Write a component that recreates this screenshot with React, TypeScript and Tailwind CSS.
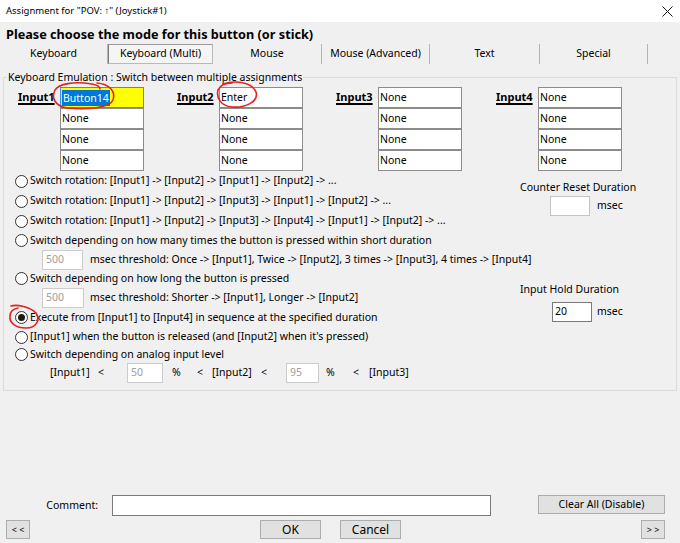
import React from "react";

const tabs = [
  { label: "Keyboard", w: "w-[108px]" },
  { label: "Keyboard (Multi)", w: "w-[105px]", active: true },
  { label: "Mouse", w: "w-[109px]" },
  { label: "Mouse (Advanced)", w: "w-[108px]" },
  { label: "Text", w: "w-[110px]" },
  { label: "Special", w: "w-[108px]" },
];

const columns = [
  { label: "Input1", w: "w-[159px]", first: "Button14" },
  { label: "Input2", w: "w-[159px]", first: "Enter" },
  { label: "Input3", w: "w-[160px]", first: "None" },
  { label: "Input4", w: "w-[126px]", first: "None" },
];

function Radio({ checked = false }: { checked?: boolean }) {
  return (
    <span className="ml-[11px] mr-[2px] flex h-[13px] w-[13px] shrink-0 items-center justify-center rounded-full border border-[#333333] bg-white">
      {checked && <span className="h-[7px] w-[7px] rounded-full bg-[#1b1b1b]" />}
    </span>
  );
}

function DisabledBox({ value, w }: { value: string; w: string }) {
  return (
    <span className={`flex h-[20px] ${w} shrink-0 items-center border border-[#cccccc] bg-white pl-[3px] text-[#a0a0a0]`}>
      {value}
    </span>
  );
}

function Cell({ text, kind }: { text: string; kind: "selected" | "plain" }) {
  if (kind === "selected") {
    return (
      <div className="flex h-[21px] w-[84px] items-center border border-[#3d8ee0] bg-[#ffff00] pl-[1px]">
        <span className="bg-[#0078d7] px-[1px] leading-[16px] text-white">{text}</span>
      </div>
    );
  }
  return (
    <div className="flex h-[21px] w-[84px] items-center border border-[#8c8c8c] bg-white pl-[1px]">{text}</div>
  );
}

function Button({ children, className }: { children: React.ReactNode; className: string }) {
  return (
    <div className={`flex items-center justify-center border border-[#adadad] bg-[#e1e1e1] ${className}`}>
      {children}
    </div>
  );
}

export default function App() {
  return (
    <div className="relative flex h-[543px] w-[680px] flex-col overflow-hidden bg-[#f0f0f0] font-['Noto_Sans',sans-serif] text-[10.5px] text-black">
      {/* window title */}
      <div className="flex h-[22px] shrink-0 items-center justify-between bg-white pl-[6px] pr-[7px] text-[9.5px]">
        <span>Assignment for "POV: ↑" (Joystick#1)</span>
        <svg width="11" height="11" viewBox="0 0 11 11">
          <path d="M0.5 0.5 L10.5 10.5 M10.5 0.5 L0.5 10.5" stroke="#111" strokeWidth="1" />
        </svg>
      </div>

      <div className="pl-[6px] pt-[3px] text-[12.7px] font-bold leading-[18px]">
        Please choose the mode for this button (or stick)
      </div>

      {/* mode tabs */}
      <div className="mt-[1px] flex h-[20px] shrink-0">
        {tabs.map((t) =>
          t.active ? (
            <div
              key={t.label}
              className={`${t.w} flex items-center justify-center border border-[#b9b9b9] border-l-[#7d7d7d] border-t-[#9a9a9a] bg-[#f5f5f5]`}
            >
              {t.label}
            </div>
          ) : (
            <div key={t.label} className={`${t.w} flex items-center justify-center border-r border-[#b4b4b4]`}>
              {t.label}
            </div>
          )
        )}
      </div>

      {/* keyboard emulation group */}
      <fieldset className="mx-[3px] mt-[5px] border border-[#dcdcdc]">
        <legend className="ml-[3px] px-[1px] leading-[16px]">
          Keyboard Emulation : Switch between multiple assignments
        </legend>

        <div className="flex pl-[14px] pt-[2px]">
          {columns.map((c, i) => (
            <div key={c.label} className={`flex ${c.w} shrink-0`}>
              <div className="flex h-[21px] w-[42px] items-center text-[11px] font-bold underline decoration-[1.5px] underline-offset-[2px]">
                {c.label}
              </div>
              <div className="flex flex-col">
                <Cell text={c.first} kind={i === 0 ? "selected" : "plain"} />
                <Cell text="None" kind="plain" />
                <Cell text="None" kind="plain" />
                <Cell text="None" kind="plain" />
              </div>
            </div>
          ))}
        </div>

        <div className="flex pb-[7px]">
          <div className="flex w-[516px] shrink-0 flex-col whitespace-nowrap">
            <div className="flex h-[20px] items-center">
              <Radio />
              <span>Switch rotation: [Input1] -&gt; [Input2] -&gt; [Input1] -&gt; [Input2] -&gt; ...</span>
            </div>
            <div className="flex h-[20px] items-center">
              <Radio />
              <span>Switch rotation: [Input1] -&gt; [Input2] -&gt; [Input3] -&gt; [Input1] -&gt; [Input2] -&gt; ...</span>
            </div>
            <div className="flex h-[20px] items-center">
              <Radio />
              <span>
                Switch rotation: [Input1] -&gt; [Input2] -&gt; [Input3] -&gt; [Input4] -&gt; [Input1] -&gt; [Input2] -&gt; ...
              </span>
            </div>
            <div className="flex h-[19px] items-center">
              <Radio />
              <span>Switch depending on how many times the button is pressed within short duration</span>
            </div>
            <div className="flex h-[19px] items-center pl-[38px]">
              <DisabledBox value="500" w="w-[41px]" />
              <span className="ml-[7px]">
                msec threshold: Once -&gt; [Input1], Twice -&gt; [Input2], 3 times -&gt; [Input3], 4 times -&gt; [Input4]
              </span>
            </div>
            <div className="flex h-[19px] items-center">
              <Radio />
              <span>Switch depending on how long the button is pressed</span>
            </div>
            <div className="flex h-[19px] items-center pl-[38px]">
              <DisabledBox value="500" w="w-[42px]" />
              <span className="ml-[6px]">msec threshold: Shorter -&gt; [Input1], Longer -&gt; [Input2]</span>
            </div>
            <div className="flex h-[21px] items-center">
              <Radio checked />
              <span>Execute from [Input1] to [Input4] in sequence at the specified duration</span>
            </div>
            <div className="flex h-[18px] items-center">
              <Radio />
              <span>[Input1] when the button is released (and [Input2] when it's pressed)</span>
            </div>
            <div className="flex h-[17px] items-center">
              <Radio />
              <span>Switch depending on analog input level</span>
            </div>
            <div className="flex h-[20px] items-center pl-[46px]">
              <span className="w-[48px] shrink-0">[Input1]</span>
              <span className="w-[29px] shrink-0">&lt;</span>
              <DisabledBox value="50" w="w-[36px]" />
              <span className="ml-[9px] w-[25px] shrink-0">%</span>
              <span className="w-[15px] shrink-0">&lt;</span>
              <span className="w-[49px] shrink-0">[Input2]</span>
              <span className="w-[25px] shrink-0">&lt;</span>
              <DisabledBox value="95" w="w-[33px]" />
              <span className="ml-[7px] w-[27px] shrink-0">%</span>
              <span className="w-[16px] shrink-0">&lt;</span>
              <span>[Input3]</span>
            </div>
          </div>

          {/* durations */}
          <div className="flex flex-col">
            <div className="mt-[8px] leading-[16px]">Counter Reset Duration</div>
            <div className="mt-[1px] flex items-center">
              <span className="ml-[30px] h-[20px] w-[40px] border border-[#c4c4c4] bg-white" />
              <span className="ml-[7px]">msec</span>
            </div>
            <div className="mt-[65px] leading-[16px]">Input Hold Duration</div>
            <div className="mt-[5px] flex items-center">
              <span className="ml-[32px] flex h-[20px] w-[40px] items-center border border-[#7a7a7a] bg-white pl-[2px]">
                20
              </span>
              <span className="ml-[5px]">msec</span>
            </div>
          </div>
        </div>
      </fieldset>

      <div className="flex-1" />

      {/* comment + actions */}
      <div className="flex h-[21px] shrink-0 items-start">
        <div className="flex h-[21px] w-[112px] items-center justify-end pr-[14px]">Comment:</div>
        <div className="h-[21px] w-[379px] border border-[#7a7a7a] bg-white" />
        <Button className="ml-auto mr-[15px] h-[19px] w-[127px]">Clear All (Disable)</Button>
      </div>
      <div className="mb-[4px] mt-[4px] flex h-[19px] shrink-0">
        <Button className="ml-[6px] h-[19px] w-[24px] text-[9px]">&lt; &lt;</Button>
        <Button className="ml-[230px] h-[19px] w-[61px] text-[12px]">OK</Button>
        <Button className="ml-[19px] h-[19px] w-[61px] text-[12px]">Cancel</Button>
        <Button className="ml-auto mr-[15px] h-[19px] w-[24px] text-[9px]">&gt; &gt;</Button>
      </div>

      {/* hand-drawn red marks */}
      <svg className="pointer-events-none absolute left-0 top-0" width="680" height="543" viewBox="0 0 680 543">
        <g fill="none" stroke="#e3231f" strokeWidth="1.6" strokeLinecap="round">
          <path d="M97 83 C109 84, 116 91, 113 100 C110 108, 86 110, 67 108 C55 106, 51 98, 55 90 C59 84, 73 81, 92 84 C97 85, 100 87, 100 89" />
          <path d="M223 84 C235 80, 252 82, 256 92 C259 102, 245 108, 232 107 C221 106, 216 98, 218 90 C220 85, 226 83, 232 83" />
          <path d="M11 306 C17 304, 30 307, 36 313 C41 320, 36 328, 26 328 C16 328, 9 323, 10 316 C10 312, 13 309, 18 308" />
        </g>
      </svg>
    </div>
  );
}
